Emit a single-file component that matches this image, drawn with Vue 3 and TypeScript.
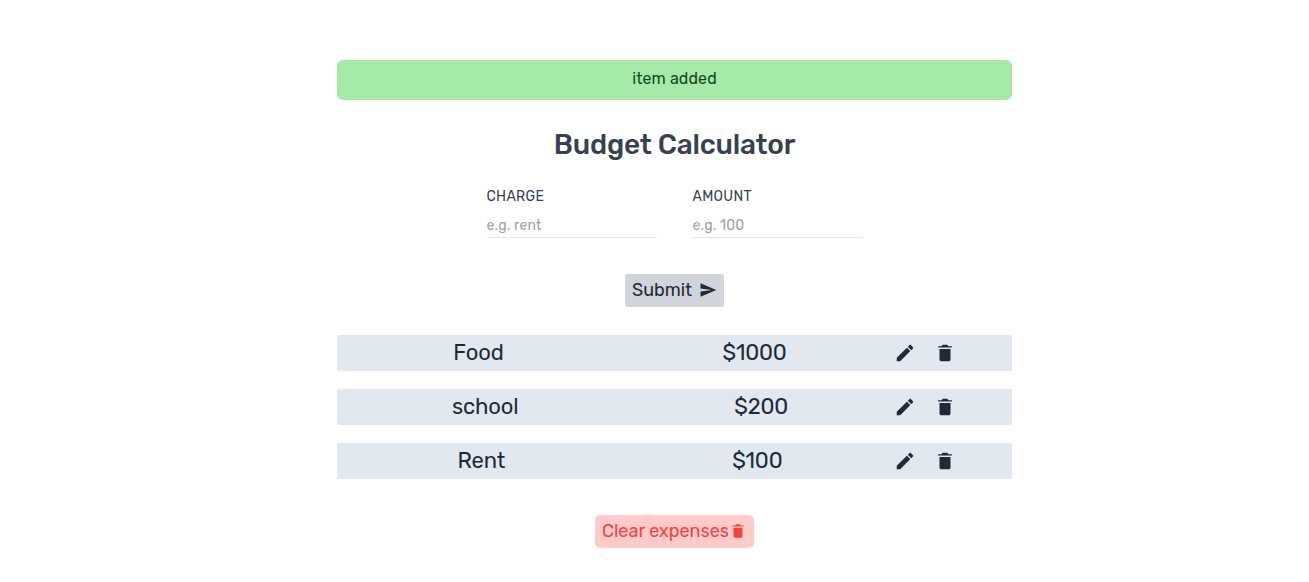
<script setup lang="ts">
import { ref } from 'vue'

interface Expense {
  id: number
  charge: string
  amount: number
}

const charge = ref('')
const amount = ref('')
const expenses = ref<Expense[]>([
  { id: 1, charge: 'Food', amount: 1000 },
  { id: 2, charge: 'school', amount: 200 },
  { id: 3, charge: 'Rent', amount: 100 },
])

const trashPath =
  'M128 405.429C128 428.846 147.198 448 170.667 448h170.667C364.802 448 384 428.846 384 405.429V160H128v245.429zM416 96h-80l-26.785-32H202.786L176 96H96v32h320V96z'
const editPath =
  'M64 368v80h80l235.727-235.729-79.999-79.998L64 368zm377.602-217.602c8.531-8.531 8.531-21.334 0-29.865l-50.135-50.135c-8.531-8.531-21.334-8.531-29.865 0l-39.468 39.469 79.999 79.998 39.469-39.467z'
</script>

<template>
  <main class="page">
    <div class="alert">item added</div>
    <h1 class="title">Budget Calculator</h1>
    <form @submit.prevent>
      <div class="fields">
        <label class="field">
          <span class="label">CHARGE</span>
          <input v-model="charge" type="text" placeholder="e.g. rent" />
        </label>
        <label class="field">
          <span class="label">AMOUNT</span>
          <input v-model="amount" type="text" placeholder="e.g. 100" />
        </label>
      </div>
      <button class="submit" type="submit">
        <span>Submit</span>
        <svg viewBox="0 0 24 24"><path d="M2.01 21L23 12 2.01 3 2 10l15 2-15 2z" /></svg>
      </button>
    </form>
    <ul class="list">
      <li v-for="item in expenses" :key="item.id" class="item">
        <div class="info">
          <span class="name">{{ item.charge }}</span>
          <span class="amount">${{ item.amount }}</span>
        </div>
        <div class="actions">
          <button type="button" aria-label="edit">
            <svg viewBox="0 0 512 512"><path :d="editPath" /></svg>
          </button>
          <button type="button" aria-label="delete">
            <svg viewBox="0 0 512 512"><path :d="trashPath" /></svg>
          </button>
        </div>
      </li>
    </ul>
    <button class="clear" type="button">
      <span>Clear expenses</span>
      <svg viewBox="0 0 512 512"><path :d="trashPath" /></svg>
    </button>
  </main>
</template>

<style>
body {
  background: #fff;
}
</style>

<style scoped>
* {
  box-sizing: border-box;
}
.page {
  width: 675px;
  margin-left: 337px;
  padding-top: 60px;
  display: flex;
  flex-direction: column;
  align-items: center;
  font-family: Rubik, Roboto, sans-serif;
  color: #1f2937;
}
button {
  border: 0;
  margin: 0;
  padding: 0;
  background: none;
  color: inherit;
  font: inherit;
  cursor: pointer;
}
svg {
  display: block;
  fill: currentColor;
  flex: none;
}
.alert {
  width: 100%;
  height: 40px;
  border-radius: 6px;
  background: #a5eba7;
  color: #14491b;
  text-align: center;
  font-size: 16px;
  line-height: 38px;
  letter-spacing: 0.1px;
}
.title {
  margin: 27px 0 0;
  height: 36px;
  line-height: 36px;
  font-size: 28px;
  font-weight: 500;
  letter-spacing: -0.22px;
  color: #374151;
  white-space: nowrap;
}
form {
  display: flex;
  flex-direction: column;
  align-items: center;
}
.fields {
  display: flex;
  gap: 36px;
  margin-top: 24px;
}
.field {
  display: flex;
  flex-direction: column;
  width: 170px;
}
.label {
  height: 20px;
  line-height: 20px;
  font-size: 14px;
  letter-spacing: 0.3px;
  color: #374151;
}
input {
  width: 170px;
  height: 25px;
  margin-top: 6px;
  padding: 0;
  border: 0;
  border-bottom: 1px solid #e2e4e7;
  background: transparent;
  outline: 0;
  font: 14px/20px Rubik, Roboto, sans-serif;
  letter-spacing: 0.2px;
  color: #374151;
}
input::placeholder {
  color: #9ca3af;
  opacity: 1;
}
.submit {
  display: flex;
  align-items: center;
  justify-content: space-between;
  width: 99px;
  height: 33px;
  margin-top: 36px;
  padding: 0 7px;
  border-radius: 2px;
  background: #d1d5db;
  font-size: 18px;
}
.submit span,
.clear span {
  padding-bottom: 2px;
}
.submit svg {
  width: 18px;
  height: 18px;
  margin-bottom: 1px;
}
.list {
  display: flex;
  flex-direction: column;
  gap: 18px;
  width: 100%;
  margin: 28px 0 0;
  padding: 0;
  list-style: none;
}
.item {
  display: flex;
  align-items: center;
  height: 36px;
  padding: 0 7px;
  border-radius: 2px;
  background: #e2e8f0;
}
.info {
  display: flex;
  justify-content: space-around;
  width: 552px;
  font-size: 22px;
  line-height: 36px;
  letter-spacing: -0.15px;
}
.actions {
  display: flex;
  gap: 18px;
  margin-left: -2px;
}
.actions svg {
  width: 22px;
  height: 22px;
}
.clear {
  display: flex;
  align-items: center;
  width: 159px;
  height: 33px;
  margin-top: 36px;
  padding: 0 7px;
  border-radius: 5px;
  background: #fecaca;
  color: #ef4444;
  font-size: 18px;
  white-space: nowrap;
}
.clear svg {
  width: 18px;
  height: 18px;
  margin-bottom: 1px;
}
</style>
